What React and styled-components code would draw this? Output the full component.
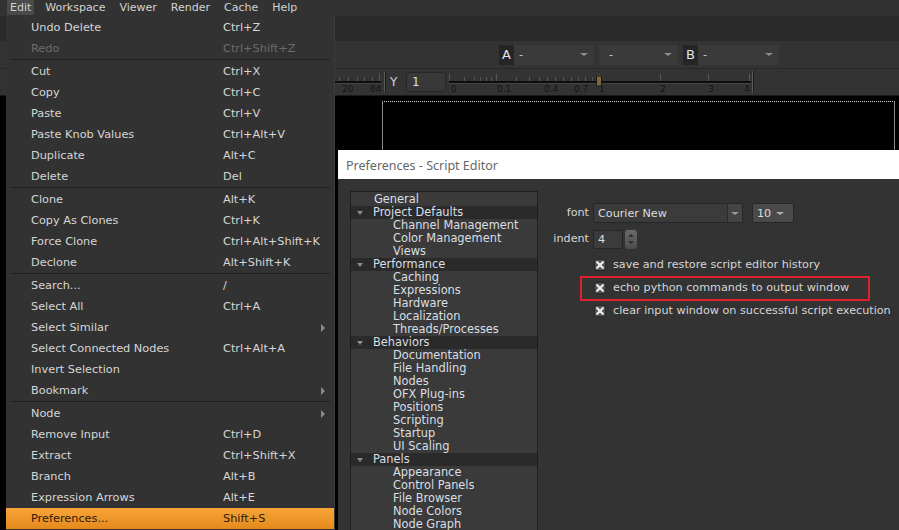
import React from "react";
import styled, { createGlobalStyle } from "styled-components";

const GlobalStyle = createGlobalStyle`
  html, body {
    margin: 0;
    padding: 0;
    background: #2b2b2b;
    overflow: hidden;
  }
  body {
    font-family: "DejaVu Sans", Verdana, sans-serif;
  }
`;

const Shell = styled.div`
  position: relative;
  width: 899px;
  height: 530px;
  display: flex;
  flex-direction: column;
  overflow: hidden;
  background: #2b2b2b;
`;

const MenuBar = styled.div`
  height: 16px;
  flex-shrink: 0;
  display: flex;
  align-items: flex-start;
  gap: 8px;
  padding-left: 7px;
  background: #323232;
  font-size: 11px;
  color: #d2d2d2;
`;

const MenuBarItem = styled.div`
  height: 15px;
  line-height: 15px;
  padding: 0 3px;
  background: ${(p) => (p.$open ? "#4a4a4a" : "transparent")};
`;

const TabStrip = styled.div`
  height: 25px;
  flex-shrink: 0;
  background: #2a2a2a;
`;

const ViewerControls = styled.div`
  height: 27px;
  flex-shrink: 0;
  display: flex;
  align-items: center;
  gap: 5px;
  padding-left: 499px;
  background: #333;
`;

const ChannelPick = styled.div`
  display: flex;
  height: 20px;
  font-size: 11px;
  color: #d0d0d0;
`;

const PickLabel = styled.div`
  width: 15px;
  display: flex;
  align-items: center;
  justify-content: center;
  background: #252525;
  font-size: 13px;
  color: #dfe6ee;
`;

const PickSelect = styled.div`
  width: ${(p) => p.$w}px;
  display: flex;
  align-items: center;
  justify-content: space-between;
  padding: 0 6px 0 ${(p) => p.$pad}px;
  box-sizing: border-box;
  background: #3a3a3a;
`;

const Caret = styled.span`
  width: 0;
  height: 0;
  border-left: ${(p) => p.$s || 4}px solid transparent;
  border-right: ${(p) => p.$s || 4}px solid transparent;
  border-top: ${(p) => (p.$s || 4) - 1}px solid ${(p) => p.$c || "#8f8f8f"};
`;

const RulerRow = styled.div`
  height: 27px;
  flex-shrink: 0;
  display: flex;
  align-items: center;
  padding-left: 334px;
  background: #333;
  border-top: 1px solid #282828;
  box-sizing: border-box;
`;

const RulerSep = styled.div`
  width: 1px;
  height: 20px;
  margin: 0 5px 0 3px;
  background: #5a5a5a;
  box-shadow: 1px 0 0 #1c1c1c;
`;

const AxisLabel = styled.span`
  width: 16px;
  font-size: 12px;
  color: #c9d6e4;
`;

const GammaInput = styled.div`
  width: 40px;
  height: 20px;
  box-sizing: border-box;
  border: 1px solid #262626;
  border-radius: 3px;
  background: #383838;
  padding-left: 5px;
  font-size: 12px;
  line-height: 18px;
  color: #cfe0f0;
  margin-right: 3px;
`;

const Viewer = styled.div`
  flex: 1;
  background: #000;
  padding: 5px 4px 0 382px;
  border-top: 1px solid #1a1a1a;
`;

const FormatFrame = styled.div`
  height: 480px;
  border-top: 1px dotted #d8d8d8;
  border-left: 1px solid #8a8a8a;
  border-right: 1px solid #8a8a8a;
`;

/* ---------- Edit menu ---------- */

const DropMenu = styled.div`
  position: absolute;
  left: 6px;
  top: 16px;
  width: 328px;
  bottom: -10px;
  padding-top: 1px;
  background: #323232;
  box-shadow: 1px 0 0 #3c3c3c;
`;

const MenuRow = styled.div`
  height: 21px;
  display: grid;
  grid-template-columns: 192px 1fr 4px;
  align-items: center;
  padding: 0 9px 0 25px;
  font-size: 11.3px;
  color: ${(p) => (p.$active ? "#2a1a08" : p.$disabled ? "#6c6c6c" : "#d6d6d6")};
  background: ${(p) =>
    p.$active ? "linear-gradient(#f8a438, #e48a1c)" : "transparent"};
`;

const MenuSep = styled.div`
  height: 2px;
  margin: 0 4px;
  border-top: 1px solid #202020;
  box-sizing: border-box;
`;

const SubArrow = styled.span`
  width: 0;
  height: 0;
  border-left: 4px solid #8a8a8a;
  border-top: 4px solid transparent;
  border-bottom: 4px solid transparent;
`;

/* ---------- Preferences dialog ---------- */

const PrefDialog = styled.div`
  position: absolute;
  left: 338px;
  top: 150px;
  right: 0;
  bottom: 0;
  display: flex;
  flex-direction: column;
  background: #333;
`;

const TitleBar = styled.div`
  height: 29px;
  flex-shrink: 0;
  padding-left: 8px;
  line-height: 31px;
  background: #fff;
  font-family: "Noto Sans", "Open Sans", sans-serif;
  font-size: 12.5px;
  color: #666;
`;

const DialogBody = styled.div`
  flex: 1;
  display: flex;
  padding: 12px 0 0 12px;
  min-height: 0;
`;

const TreePanel = styled.div`
  width: 188px;
  flex-shrink: 0;
  box-sizing: border-box;
  border: 1px solid #1f1f1f;
  border-bottom: none;
  padding-top: 1px;
  background: #3a3a3a;
  font-size: 11.4px;
  color: #d9dfe4;
  overflow: hidden;
`;

const TreeRow = styled.div`
  height: 13px;
  line-height: 15px;
  display: flex;
  align-items: center;
  white-space: nowrap;
  padding-left: ${(p) => (p.$cat ? 6 : p.$child ? 42 : 23)}px;
  background: ${(p) => (p.$cat ? "#2a2a2a" : "transparent")};
`;

const TreeArrow = styled.span`
  width: 0;
  height: 0;
  margin-right: 10px;
  border-left: 3.5px solid transparent;
  border-right: 3.5px solid transparent;
  border-top: 4px solid #8c8c8c;
`;

const SettingsPane = styled.div`
  flex: 1;
  padding-top: 11px;
  font-size: 11.2px;
  color: #d6d6d6;
`;

const FieldRow = styled.div`
  display: grid;
  grid-template-columns: 51px auto;
  column-gap: 4px;
  align-items: center;
  height: ${(p) => p.$h}px;
  margin-bottom: 6px;
`;

const FieldLabel = styled.span`
  text-align: right;
  line-height: 22px;
`;

const Controls = styled.div`
  display: flex;
  align-items: center;
  height: 100%;
`;

const Combo = styled.div`
  display: flex;
  width: ${(p) => p.$w}px;
  height: 20px;
  box-sizing: border-box;
  border: 1px solid #262626;
  border-radius: 2px;
  background: ${(p) => (p.$light ? "#4a4a4a" : "#3b3b3b")};
  margin-right: ${(p) => p.$mr || 0}px;
`;

const ComboText = styled.span`
  flex: 1;
  padding-left: 4px;
  line-height: 19px;
  color: #dcdcdc;
`;

const ComboButton = styled.span`
  width: 14px;
  display: flex;
  align-items: center;
  justify-content: center;
  border-left: ${(p) => (p.$split ? "1px solid #2a2a2a" : "none")};
  background: ${(p) => (p.$split ? "#444" : "transparent")};
  margin-right: ${(p) => (p.$split ? 0 : 6)}px;
`;

const NumberBox = styled.div`
  width: 30px;
  height: 19px;
  box-sizing: border-box;
  border: 1px solid #262626;
  border-radius: 2px;
  background: #3b3b3b;
  padding-left: 4px;
  line-height: 18px;
  color: #dcdcdc;
  margin-right: 2px;
`;

const Spinner = styled.div`
  width: 12px;
  height: 19px;
  box-sizing: border-box;
  border-radius: 3px;
  background: linear-gradient(#6a6a6a, #4c4c4c);
  display: flex;
  flex-direction: column;
  align-items: center;
  justify-content: space-around;
  padding: 2px 0;
`;

const SpinTri = styled.span`
  width: 0;
  height: 0;
  border-left: 3px solid transparent;
  border-right: 3px solid transparent;
  ${(p) => (p.$up ? "border-bottom" : "border-top")}: 3px solid #2e2e2e;
`;

const CheckList = styled.div`
  margin-top: 3px;
  padding-left: 56px;
`;

const CheckRow = styled.div`
  position: relative;
  height: 23px;
  display: flex;
  align-items: center;
  gap: 7px;
  white-space: nowrap;

  ${(p) =>
    p.$flagged &&
    `
    &::after {
      content: "";
      position: absolute;
      left: -14px;
      top: 0;
      width: 286px;
      height: 21px;
      border: 2px solid #e2202b;
    }
  `}
`;

const CheckMark = () => (
  <svg width="12" height="12" viewBox="0 0 12 12">
    <rect x="0.5" y="0.5" width="11" height="11" rx="1.5" fill="#555" stroke="#282828" />
    <path d="M3.2 3.2 L8.8 8.8 M8.8 3.2 L3.2 8.8" stroke="#ececec" strokeWidth="2.3" strokeLinecap="round" />
  </svg>
);

/* ---------- ruler drawings ---------- */

const LeftRuler = () => (
  <svg width="47" height="26" viewBox="0 0 47 26">
    <rect x="0" y="12" width="47" height="2" fill="#0e0e0e" />
    <rect x="0" y="14" width="47" height="1" fill="#444" />
    {[5, 14, 23, 30, 38].map((x) => (
      <rect key={x} x={x} y="8" width="1" height="4" fill="#555" />
    ))}
    <rect x="45" y="4" width="1" height="8" fill="#555" />
    <text x="8" y="23" fontSize="9" fill="#141414" fontFamily="DejaVu Sans">20</text>
    <text x="36" y="23" fontSize="9" fill="#141414" fontFamily="DejaVu Sans">64</text>
  </svg>
);

const gammaTicks = [15, 25, 31, 37, 42, 67, 80, 90, 98, 106, 114, 122, 129, 136, 143];
const gammaMajor = [0, 47, 150, 211, 259, 300];
const gammaLabels = [
  ["0", 2],
  ["0.1", 48],
  ["0.4", 95],
  ["0.7", 125],
  ["1", 150],
  ["2", 211],
  ["3", 259],
  ["4", 295],
];

const GammaRuler = () => (
  <svg width="306" height="26" viewBox="0 0 306 26">
    <rect x="0" y="12" width="302" height="2" fill="#0e0e0e" />
    <rect x="0" y="14" width="302" height="1" fill="#444" />
    {gammaTicks.map((x) => (
      <rect key={x} x={x} y="8" width="1" height="4" fill="#555" />
    ))}
    {gammaMajor.map((x) => (
      <rect key={x} x={x} y="5" width="1" height="7" fill="#555" />
    ))}
    {gammaLabels.map(([t, x]) => (
      <text key={t} x={x} y="23" fontSize="9" fill="#141414" fontFamily="DejaVu Sans">
        {t}
      </text>
    ))}
    <rect x="147.5" y="7" width="5" height="10" rx="1" fill="#7c6a38" stroke="#1a1a1a" />
    <rect x="303" y="2" width="1" height="22" fill="#5a5a5a" />
    <rect x="304" y="2" width="1" height="22" fill="#1c1c1c" />
  </svg>
);

/* ---------- data ---------- */

const topMenus = ["Edit", "Workspace", "Viewer", "Render", "Cache", "Help"];

const editItems = [
  { label: "Undo Delete", key: "Ctrl+Z" },
  { label: "Redo", key: "Ctrl+Shift+Z", disabled: true },
  "sep",
  { label: "Cut", key: "Ctrl+X" },
  { label: "Copy", key: "Ctrl+C" },
  { label: "Paste", key: "Ctrl+V" },
  { label: "Paste Knob Values", key: "Ctrl+Alt+V" },
  { label: "Duplicate", key: "Alt+C" },
  { label: "Delete", key: "Del" },
  "sep",
  { label: "Clone", key: "Alt+K" },
  { label: "Copy As Clones", key: "Ctrl+K" },
  { label: "Force Clone", key: "Ctrl+Alt+Shift+K" },
  { label: "Declone", key: "Alt+Shift+K" },
  "sep",
  { label: "Search...", key: "/" },
  { label: "Select All", key: "Ctrl+A" },
  { label: "Select Similar", sub: true },
  { label: "Select Connected Nodes", key: "Ctrl+Alt+A" },
  { label: "Invert Selection" },
  { label: "Bookmark", sub: true },
  "sep",
  { label: "Node", sub: true },
  { label: "Remove Input", key: "Ctrl+D" },
  { label: "Extract", key: "Ctrl+Shift+X" },
  { label: "Branch", key: "Alt+B" },
  { label: "Expression Arrows", key: "Alt+E" },
  { label: "Preferences...", key: "Shift+S", active: true },
];

const prefTree = [
  { label: "General" },
  { label: "Project Defaults", cat: true },
  { label: "Channel Management", child: true },
  { label: "Color Management", child: true },
  { label: "Views", child: true },
  { label: "Performance", cat: true },
  { label: "Caching", child: true },
  { label: "Expressions", child: true },
  { label: "Hardware", child: true },
  { label: "Localization", child: true },
  { label: "Threads/Processes", child: true },
  { label: "Behaviors", cat: true },
  { label: "Documentation", child: true },
  { label: "File Handling", child: true },
  { label: "Nodes", child: true },
  { label: "OFX Plug-ins", child: true },
  { label: "Positions", child: true },
  { label: "Scripting", child: true },
  { label: "Startup", child: true },
  { label: "UI Scaling", child: true },
  { label: "Panels", cat: true },
  { label: "Appearance", child: true },
  { label: "Control Panels", child: true },
  { label: "File Browser", child: true },
  { label: "Node Colors", child: true },
  { label: "Node Graph", child: true },
];

const scriptOptions = [
  { text: "save and restore script editor history" },
  { text: "echo python commands to output window", flagged: true },
  { text: "clear input window on successful script execution" },
];

export default function App() {
  return (
    <>
      <GlobalStyle />
      <Shell>
        <MenuBar>
          {topMenus.map((m) => (
            <MenuBarItem key={m} $open={m === "Edit"}>
              {m}
            </MenuBarItem>
          ))}
        </MenuBar>
        <TabStrip />
        <ViewerControls>
          <ChannelPick>
            <PickLabel>A</PickLabel>
            <PickSelect $w={80} $pad={5}>
              <span>-</span>
              <Caret />
            </PickSelect>
          </ChannelPick>
          <ChannelPick>
            <PickSelect $w={79} $pad={10}>
              <span>-</span>
              <Caret />
            </PickSelect>
          </ChannelPick>
          <ChannelPick>
            <PickLabel>B</PickLabel>
            <PickSelect $w={81} $pad={5}>
              <span>-</span>
              <Caret />
            </PickSelect>
          </ChannelPick>
        </ViewerControls>
        <RulerRow>
          <LeftRuler />
          <RulerSep />
          <AxisLabel>Y</AxisLabel>
          <GammaInput>1</GammaInput>
          <GammaRuler />
        </RulerRow>
        <Viewer>
          <FormatFrame />
        </Viewer>

        <DropMenu>
          {editItems.map((it, i) =>
            it === "sep" ? (
              <MenuSep key={i} />
            ) : (
              <MenuRow key={i} $disabled={it.disabled} $active={it.active}>
                <span>{it.label}</span>
                <span>{it.key || ""}</span>
                {it.sub ? <SubArrow /> : <span />}
              </MenuRow>
            )
          )}
        </DropMenu>

        <PrefDialog>
          <TitleBar>Preferences - Script Editor</TitleBar>
          <DialogBody>
            <TreePanel>
              {prefTree.map((n) => (
                <TreeRow key={n.label} $cat={n.cat} $child={n.child}>
                  {n.cat && <TreeArrow />}
                  {n.label}
                </TreeRow>
              ))}
            </TreePanel>
            <SettingsPane>
              <FieldRow $h={20}>
                <FieldLabel>font</FieldLabel>
                <Controls>
                  <Combo $w={150} $mr={9}>
                    <ComboText>Courier New</ComboText>
                    <ComboButton $split>
                      <Caret $s={4} $c="#9a9a9a" />
                    </ComboButton>
                  </Combo>
                  <Combo $w={42} $light>
                    <ComboText>10</ComboText>
                    <ComboButton>
                      <Caret $s={4} $c="#b0b0b0" />
                    </ComboButton>
                  </Combo>
                </Controls>
              </FieldRow>
              <FieldRow $h={19}>
                <FieldLabel>indent</FieldLabel>
                <Controls>
                  <NumberBox>4</NumberBox>
                  <Spinner>
                    <SpinTri $up />
                    <SpinTri />
                  </Spinner>
                </Controls>
              </FieldRow>
              <CheckList>
                {scriptOptions.map((o) => (
                  <CheckRow key={o.text} $flagged={o.flagged}>
                    <CheckMark />
                    <span>{o.text}</span>
                  </CheckRow>
                ))}
              </CheckList>
            </SettingsPane>
          </DialogBody>
        </PrefDialog>
      </Shell>
    </>
  );
}
